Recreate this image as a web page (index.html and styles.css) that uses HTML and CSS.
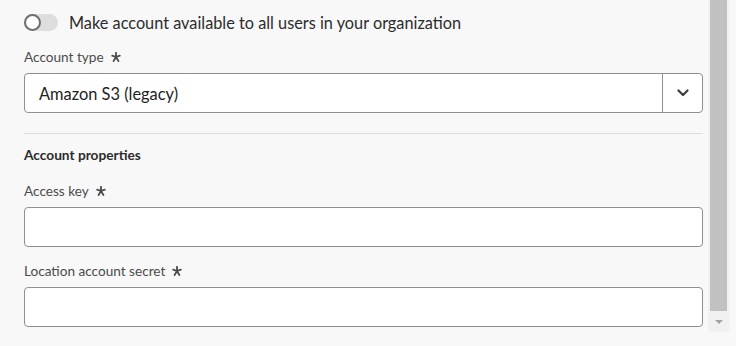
FILE: index.html
```html
<!DOCTYPE html>
<html>
<head>
<meta charset="utf-8">
<link rel="stylesheet" href="styles.css">
</head>
<body>
<div class="frame">
  <div class="panel">
    <div class="content">
      <div class="switch-row">
        <span class="switch"><span class="switch-handle"></span></span>
        <span class="switch-label">Make account available to all users in your organization</span>
      </div>

      <div class="field-label">Account type <svg class="req" viewBox="0 0 10 10"><path d="M5 0.8V5M5 5L1.2 3.6M5 5L8.8 3.6M5 5L2.6 9M5 5L7.4 9"/></svg></div>
      <div class="picker">
        <span class="picker-value">Amazon S3 (legacy)</span>
        <span class="picker-button"><svg viewBox="0 0 12 8"><path d="M1.5 1.5L6 6L10.5 1.5"/></svg></span>
      </div>

      <hr class="divider">

      <div class="section-title">Account properties</div>

      <div class="field-label">Access key <svg class="req" viewBox="0 0 10 10"><path d="M5 0.8V5M5 5L1.2 3.6M5 5L8.8 3.6M5 5L2.6 9M5 5L7.4 9"/></svg></div>
      <div class="textfield"></div>

      <div class="field-label spaced">Location account secret <svg class="req" viewBox="0 0 10 10"><path d="M5 0.8V5M5 5L1.2 3.6M5 5L8.8 3.6M5 5L2.6 9M5 5L7.4 9"/></svg></div>
      <div class="textfield"></div>
    </div>
    <div class="scrollbar">
      <div class="thumb"></div>
      <div class="sb-button"><span class="sb-arrow"></span></div>
    </div>
  </div>
</div>
</body>
</html>
```

FILE: styles.css
```css
html, body {
  margin: 0;
  padding: 0;
  background: #f8f8f8;
  font-family: Lato, "Open Sans", sans-serif;
}
.frame {
  width: 736px;
  height: 346px;
  overflow: hidden;
}
.panel {
  display: flex;
  width: 729px;
  height: 332px;
  overflow: hidden;
}
.content {
  width: 679px;
  padding: 6px 5px 0 24px;
  flex: none;
}
.switch-row {
  display: flex;
  align-items: center;
  height: 32px;
  gap: 11px;
}
.switch {
  position: relative;
  display: block;
  width: 34px;
  height: 17px;
  border-radius: 9px;
  background: #dedede;
  flex: none;
}
.switch-handle {
  position: absolute;
  left: 0;
  top: 0;
  width: 17px;
  height: 17px;
  box-sizing: border-box;
  border: 2px solid #6e6e6e;
  border-radius: 50%;
  background: #fff;
}
.switch-label {
  font-size: 16.3px;
  color: #2c2c2c;
}
.field-label {
  display: flex;
  align-items: center;
  height: 24px;
  margin-top: 7px;
  margin-bottom: 4px;
  font-size: 13.6px;
  color: #4b4b4b;
}
.field-label.spaced {
  margin-top: 12px;
}
.req {
  width: 10px;
  height: 10px;
  margin-left: 7px;
  fill: none;
  stroke: #4b4b4b;
  stroke-width: 1.8;
  stroke-linecap: round;
}
.picker {
  display: flex;
  height: 40px;
  box-sizing: border-box;
  border: 1px solid #8f8f8f;
  border-radius: 4px;
  background: #fff;
}
.picker-value {
  flex: 1;
  display: flex;
  align-items: center;
  padding-left: 14px;
  font-size: 16.4px;
  color: #222;
}
.picker-button {
  width: 39px;
  border-left: 1px solid #8f8f8f;
  display: flex;
  align-items: center;
  justify-content: center;
}
.picker-button svg {
  width: 12px;
  height: 8px;
  fill: none;
  stroke: #3c3c3c;
  stroke-width: 2.2;
  stroke-linecap: round;
  stroke-linejoin: round;
}
.divider {
  margin: 20px 0 0;
  border: 0;
  height: 1px;
  background: #dedede;
}
.section-title {
  margin-top: 9px;
  height: 24px;
  line-height: 24px;
  font-size: 13.7px;
  font-weight: 700;
  color: #2c2c2c;
}
.section-title + .field-label {
  margin-top: 12px;
}
.textfield {
  height: 40px;
  box-sizing: border-box;
  border: 1px solid #8f8f8f;
  border-radius: 4px;
  background: #fff;
}
.scrollbar {
  width: 21px;
  flex: none;
  display: flex;
  flex-direction: column;
  background: #f1f1f1;
}
.thumb {
  flex: 1;
  margin: 0 2px;
  background: #c1c1c1;
}
.sb-button {
  height: 21px;
  display: flex;
  align-items: center;
  justify-content: center;
}
.sb-arrow {
  width: 0;
  height: 0;
  border-left: 4px solid transparent;
  border-right: 4px solid transparent;
  border-top: 4px solid #a3a3a3;
}
```
